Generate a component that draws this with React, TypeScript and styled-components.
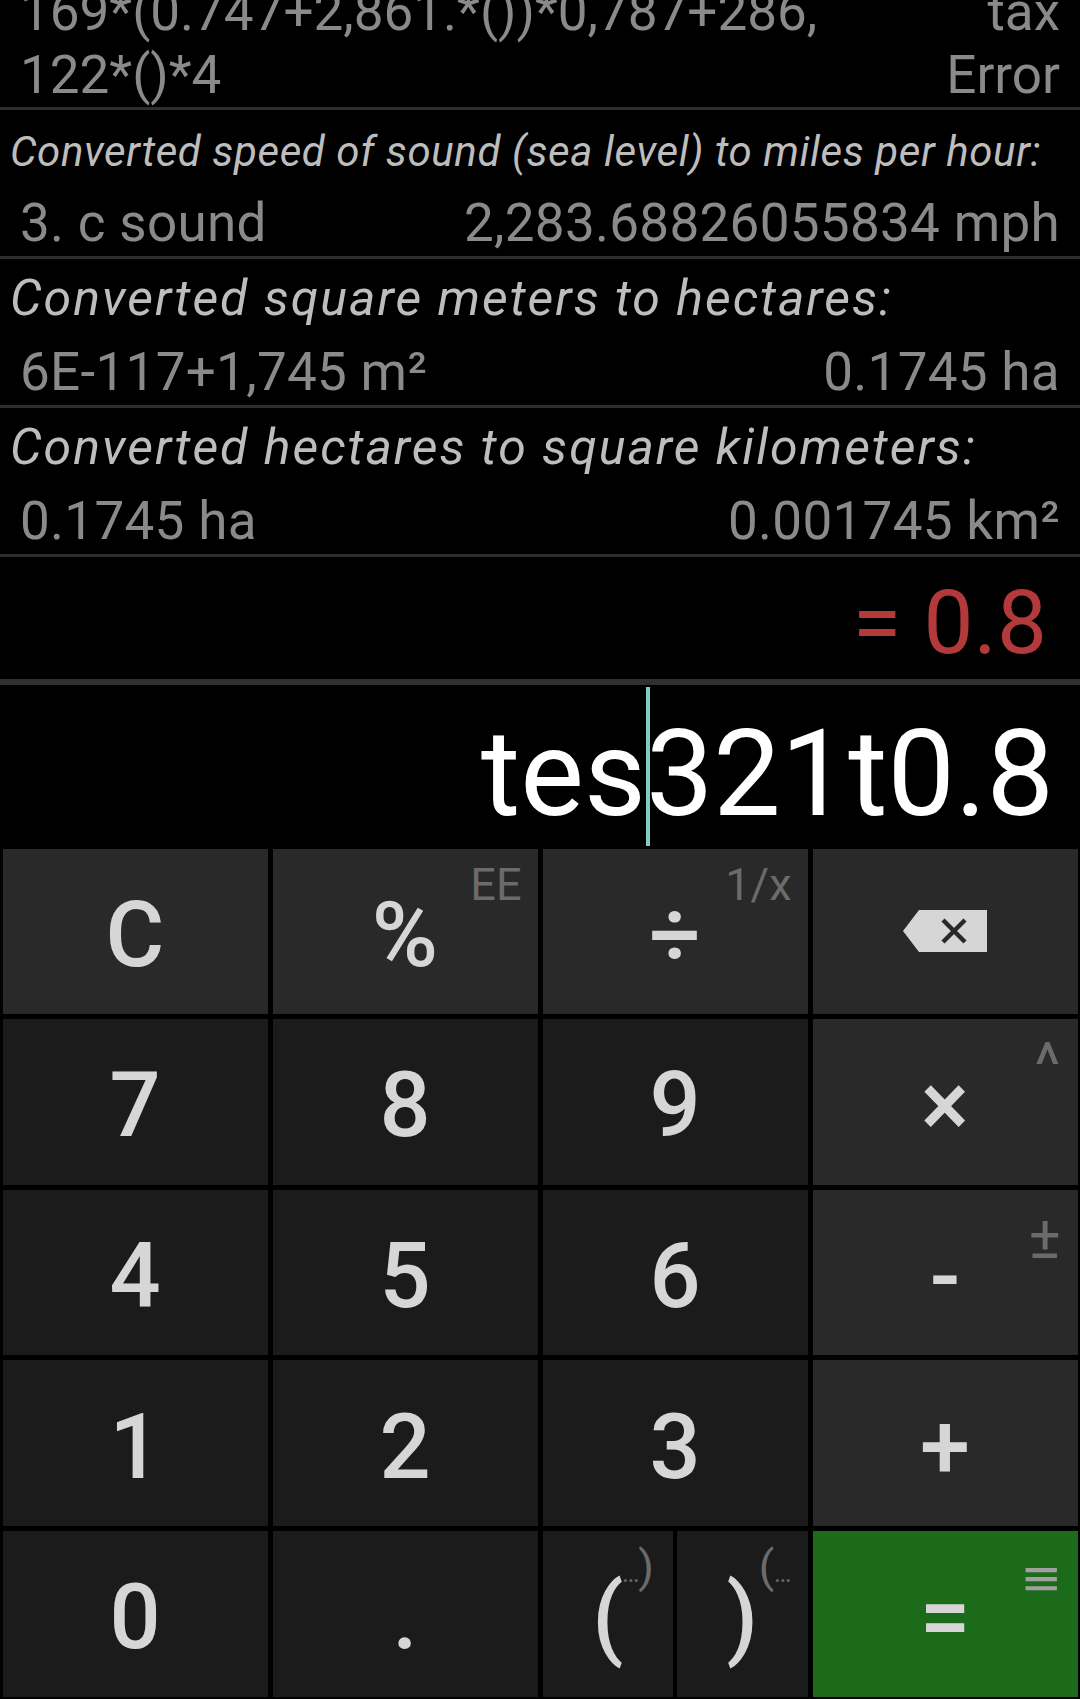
import React from 'react';
import styled, { createGlobalStyle } from 'styled-components';

const GlobalStyle = createGlobalStyle`
  html, body { margin: 0; padding: 0; background: #000; }
  body { font-family: Roboto, "Noto Sans", "DejaVu Sans", sans-serif; }
  * { box-sizing: border-box; }
`;

const Screen = styled.div`
  width: 1080px;
  height: 1699px;
  background: #000;
  display: flex;
  flex-direction: column;
  overflow: hidden;
  font-family: Roboto, "Noto Sans", "DejaVu Sans", sans-serif;
`;

const History = styled.div`
  flex: none;
  height: 557px;
  display: flex;
  flex-direction: column;
  justify-content: flex-end;
  overflow: hidden;
`;

const Entry = styled.div`
  flex: none;
  border-bottom: 3px solid #2e2e2e;
`;

const ExprEntry = styled(Entry)`
  display: flex;
  justify-content: space-between;
  padding: 0 20px;
  font-size: 53px;
  line-height: 63px;
  color: #8a8a8a;
`;

const Lines = styled.div<{ $align: 'left' | 'right' }>`
  display: flex;
  flex-direction: column;
  text-align: ${(p) => p.$align};
  white-space: nowrap;
`;

const ConvEntry = styled(Entry)`
  height: 149px;
`;

const Heading = styled.div<{ $size: number; $spacing: number }>`
  height: 83px;
  padding: ${(p) => (26.5 - 0.342 * p.$size).toFixed(1)}px 0 0 10px;
  font-size: ${(p) => p.$size}px;
  letter-spacing: ${(p) => p.$spacing}px;
  line-height: 60px;
  font-style: italic;
  color: #bdbdbd;
  white-space: nowrap;
`;

const ValueLine = styled.div`
  display: flex;
  justify-content: space-between;
  height: 60px;
  padding: 0 20px;
  font-size: 53px;
  letter-spacing: 0.3px;
  line-height: 60px;
  color: #8a8a8a;
  white-space: nowrap;
`;

const Result = styled.div`
  flex: none;
  height: 128px;
  border-bottom: 6px solid #303030;
  padding: 10px 33px 0 0;
  text-align: right;
  font-size: 89px;
  line-height: 112px;
  color: #b3393a;
`;

const InputRow = styled.div`
  flex: none;
  height: 161px;
  display: flex;
  justify-content: flex-end;
  align-items: stretch;
  padding-right: 26px;
  color: #ffffff;
`;

const InputText = styled.span`
  font-size: 120px;
  line-height: 144px;
  padding-top: 17px;
  white-space: pre;
`;

const Caret = styled.span`
  position: relative;
  width: 0;
  &::after {
    content: '';
    position: absolute;
    top: 2px;
    bottom: 0;
    left: 0;
    width: 4px;
    background: #80cbc4;
  }
`;

const Keypad = styled.div`
  flex: none;
  height: 853px;
  display: grid;
  grid-template-columns: repeat(4, 1fr);
  grid-template-rows: repeat(5, 1fr);
  gap: 5px;
  padding: 2.5px;
  background: #000;
`;

type Tone = 'num' | 'op' | 'eq';
const toneBg: Record<Tone, string> = {
  num: '#1b1b1b',
  op: '#292929',
  eq: '#1b6b1b',
};

const Key = styled.button<{ $tone: Tone }>`
  position: relative;
  border: 0;
  margin: 0;
  min-width: 0;
  background: ${(p) => toneBg[p.$tone]};
  color: #d6d6d6;
  font-family: inherit;
  font-size: 90px;
  font-weight: 500;
  line-height: 1;
  display: flex;
  align-items: center;
  justify-content: center;
  padding: 9px 0 0;
`;

const Sup = styled.span<{ $light?: boolean; $size?: number; $top?: number; $right?: number }>`
  position: absolute;
  top: ${(p) => p.$top ?? 13}px;
  right: ${(p) => p.$right ?? 16}px;
  font-size: ${(p) => p.$size ?? 45}px;
  line-height: 1;
  font-weight: 400;
  white-space: nowrap;
  color: ${(p) => (p.$light ? '#a0a0a0' : '#6b6b6b')};
`;

const Dots = styled.span`
  font-size: 26px;
  letter-spacing: -1px;
`;

const Split = styled.div`
  display: grid;
  grid-template-columns: 1fr 1fr;
  gap: 4px;
  min-width: 0;
`;

const BackIcon = styled.svg`
  width: 84px;
  height: 42px;
  margin-top: -9px;
`;

const conversions = [
  {
    size: 42,
    spacing: 0.6,
    title: 'Converted speed of sound (sea level) to miles per hour:',
    from: '3. c sound',
    to: '2,283.68826055834 mph',
  },
  {
    size: 50,
    spacing: 2,
    title: 'Converted square meters to hectares:',
    from: '6E-117+1,745 m²',
    to: '0.1745 ha',
  },
  {
    size: 50,
    spacing: 2,
    title: 'Converted hectares to square kilometers:',
    from: '0.1745 ha',
    to: '0.001745 km²',
  },
];

export default function App() {
  return (
    <>
      <GlobalStyle />
      <Screen>
        <History>
          <ExprEntry>
            <Lines $align="left">
              <span>169*(0.747+2,861.*())*0,787+286,</span>
              <span>122*()*4</span>
            </Lines>
            <Lines $align="right">
              <span>tax</span>
              <span>Error</span>
            </Lines>
          </ExprEntry>
          {conversions.map((c) => (
            <ConvEntry key={c.title}>
              <Heading $size={c.size} $spacing={c.spacing}>
                {c.title}
              </Heading>
              <ValueLine>
                <span>{c.from}</span>
                <span>{c.to}</span>
              </ValueLine>
            </ConvEntry>
          ))}
        </History>

        <Result>= 0.8</Result>

        <InputRow>
          <InputText>tes</InputText>
          <Caret />
          <InputText>321t0.8</InputText>
        </InputRow>

        <Keypad>
          <Key $tone="op">C</Key>
          <Key $tone="op">
            %<Sup>EE</Sup>
          </Key>
          <Key $tone="op">
            ÷<Sup>1/x</Sup>
          </Key>
          <Key $tone="op" aria-label="backspace">
            <BackIcon viewBox="0 0 84 42">
              <path d="M0 21 L16 0 H84 V42 H16 Z" fill="#d6d6d6" />
              <path d="M40 10 L62 32 M62 10 L40 32" stroke="#292929" strokeWidth="4.5" />
            </BackIcon>
          </Key>

          <Key $tone="num">7</Key>
          <Key $tone="num">8</Key>
          <Key $tone="num">9</Key>
          <Key $tone="op">
            ×
            <Sup $size={62} $top={15} $right={17}>
              ^
            </Sup>
          </Key>

          <Key $tone="num">4</Key>
          <Key $tone="num">5</Key>
          <Key $tone="num">6</Key>
          <Key $tone="op">
            -
            <Sup $size={60} $top={18} $right={17}>
              ±
            </Sup>
          </Key>

          <Key $tone="num">1</Key>
          <Key $tone="num">2</Key>
          <Key $tone="num">3</Key>
          <Key $tone="op">+</Key>

          <Key $tone="num">0</Key>
          <Key $tone="num">.</Key>
          <Split>
            <Key $tone="num">
              (
              <Sup $right={19}>
                <Dots>…</Dots>)
              </Sup>
            </Key>
            <Key $tone="num">
              )
              <Sup $right={17}>
                (<Dots>…</Dots>
              </Sup>
            </Key>
          </Split>
          <Key $tone="eq">
            =
            <Sup $light $size={50} $top={22} $right={15}>
              ≡
            </Sup>
          </Key>
        </Keypad>
      </Screen>
    </>
  );
}
